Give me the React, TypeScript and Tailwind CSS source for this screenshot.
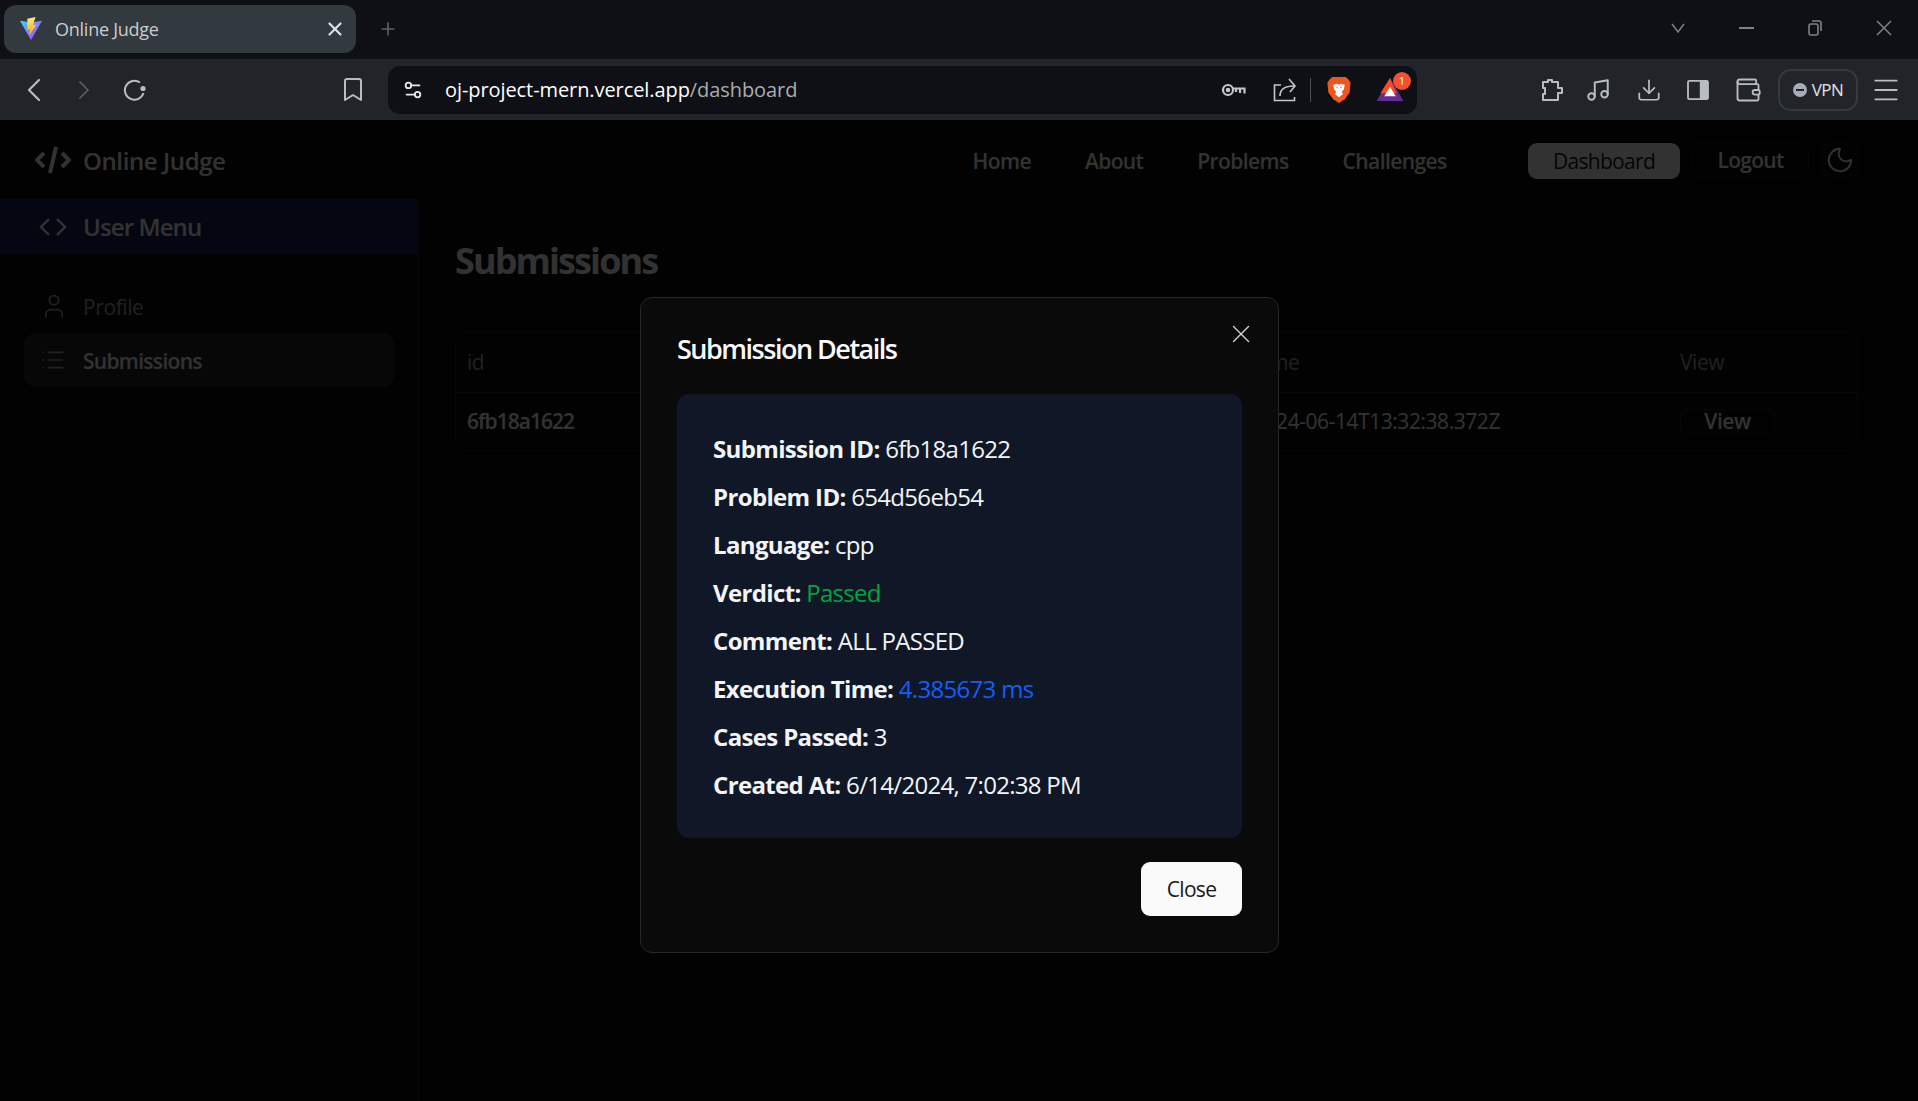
import { ReactNode } from "react";
import { ChevronLeft, ChevronRight, Download, List, Menu, Moon, Music, Plus, Settings2, User, Wallet, X } from "lucide-react";

function ViteLogo() {
  return (
    <svg width="24" height="24" viewBox="0 0 26 26">
      <defs>
        <linearGradient id="vt1" x1="0" y1="0" x2="1" y2="1">
          <stop offset="0" stopColor="#41d1ff" />
          <stop offset="1" stopColor="#bd34fe" />
        </linearGradient>
        <linearGradient id="vt2" x1="0" y1="0" x2="0" y2="1">
          <stop offset="0" stopColor="#ffea83" />
          <stop offset="1" stopColor="#ffa800" />
        </linearGradient>
      </defs>
      <path d="M1 4 L13 6 L25 4 L13 25 Z" fill="url(#vt1)" />
      <path d="M18 0 L9 2 L9 14 L12 13 L11 20 L19 8 L15 9 Z" fill="url(#vt2)" />
    </svg>
  );
}

function KeyIcon() {
  return (
    <svg width="25" height="16" viewBox="0 0 25 16" fill="none" stroke="#c4c7ca" strokeWidth="2.2">
      <circle cx="7" cy="8" r="5" />
      <circle cx="7" cy="8" r="1.2" />
      <path d="M12 6.5h11.5v5M19 6.5v4.5M15 6.5v3.5" />
    </svg>
  );
}

function ShareIcon() {
  return (
    <svg width="24" height="24" viewBox="0 0 24 24" fill="none" stroke="#c4c7ca" strokeWidth="1.6">
      <path d="M8 7H1.5v15.5h20V19" />
      <path d="M7 18c0-6 4-10 14-10" />
      <path d="M16 1l6 7-5 6" />
    </svg>
  );
}

function BraveIcon() {
  return (
    <svg width="24" height="27" viewBox="0 0 24 28">
      <path d="M5 1h14l3 3 2 3-1 10-5 7-6 4-6-4-5-7L0 7l2-3z" fill="#f1561f" />
      <path d="M6 9l4-1 2 1 2-1 4 1-1 5-2 2 1 3-4 3-4-3 1-3-2-2z" fill="#fff" />
      <path d="M9 11l2 1-1 1zM15 11l-2 1 1 1z" fill="#f1561f" />
    </svg>
  );
}

function RewardsIcon() {
  return (
    <div className="relative w-[28px] h-[26px]">
      <svg width="28" height="23" viewBox="0 0 28 24" className="absolute left-0 top-[1px]">
        <path d="M14 0L28 24H0Z" fill="#662d91" />
        <path d="M14 0L21 16H4Z" fill="#ff4724" />
        <path d="M14 9L20 19H8Z" fill="#fff" />
      </svg>
      <span className="absolute left-[17px] top-[-5px] w-[18px] h-[18px] rounded-full bg-[#f3512f] text-white text-[11px] leading-[18px] text-center">
        1
      </span>
    </div>
  );
}

function ReloadIcon() {
  return (
    <svg width="24" height="22" viewBox="0 0 24 22" fill="none" stroke="#b8bdc0" strokeWidth="2">
      <path d="M17 3.5A9.5 9.5 0 1 0 20.5 14" />
      <circle cx="20" cy="9.5" r="2.6" fill="#b8bdc0" stroke="none" />
    </svg>
  );
}

function BookmarkIcon() {
  return (
    <svg width="18" height="24" viewBox="0 0 18 24" fill="none" stroke="#b8bdc0" strokeWidth="2">
      <path d="M3 1h12a2 2 0 0 1 2 2v19l-8-5-8 5V3a2 2 0 0 1 2-2z" strokeLinejoin="round" />
    </svg>
  );
}

function PuzzleIcon() {
  return (
    <svg width="24" height="22" viewBox="0 0 24 22" fill="none" stroke="#b8bdc0" strokeWidth="2">
      <path d="M3 3h5V1h4v2h6v6h4v5h-4v7H3v-6h2V9H3z" strokeLinejoin="round" />
    </svg>
  );
}

function SidePanelIcon() {
  return (
    <svg width="22" height="20" viewBox="0 0 24 22">
      <rect x="1" y="1" width="22" height="20" rx="1.5" fill="none" stroke="#b8bdc0" strokeWidth="2" />
      <rect x="14" y="1" width="9" height="20" fill="#b8bdc0" />
    </svg>
  );
}

function WindowControls() {
  return (
    <div className="ml-auto flex items-center h-[46px] mr-[26px]">
      <svg width="14" height="10" viewBox="0 0 14 10" fill="none" stroke="#7c8287" strokeWidth="1.5">
        <path d="M1 1l6 8 6-8" />
      </svg>
      <div className="ml-[54px] w-[15px] h-[2px] bg-[#7c8287]" />
      <svg className="ml-[54px]" width="14" height="16" viewBox="0 0 14 16" fill="none" stroke="#7c8287" strokeWidth="1.6">
        <rect x="1" y="4" width="9" height="11" rx="2" />
        <path d="M4 1h7a2 2 0 0 1 2 2v8" />
      </svg>
      <svg className="ml-[54px]" width="16" height="16" viewBox="0 0 16 16" fill="none" stroke="#7c8287" strokeWidth="1.5">
        <path d="M1 1l14 14M15 1L1 15" />
      </svg>
    </div>
  );
}

const navLinks = [
  { label: "Home", cls: "ml-[747px]" },
  { label: "About", cls: "ml-[54px]" },
  { label: "Problems", cls: "ml-[54px]" },
  { label: "Challenges", cls: "ml-[54px]" },
];

const detalhes: { label: string; value: string; cor?: string }[] = [
  { label: "Submission ID:", value: "6fb18a1622" },
  { label: "Problem ID:", value: "654d56eb54" },
  { label: "Language:", value: "cpp" },
  { label: "Verdict:", value: "Passed", cor: "text-green-600" },
  { label: "Comment:", value: "ALL PASSED" },
  { label: "Execution Time:", value: "4.385673 ms", cor: "text-blue-600" },
  { label: "Cases Passed:", value: "3" },
  { label: "Created At:", value: "6/14/2024, 7:02:38 PM" },
];

function Slot({ w, children }: { w: string; children: ReactNode }) {
  return <div className={`flex items-center justify-center ${w}`}>{children}</div>;
}

function BrowserChrome() {
  return (
    <div className="h-[120px] flex flex-col font-['Open_Sans',sans-serif]">
      <div className="h-[59px] bg-[#0e1015] flex items-start pt-[5px]">
        <div className="ml-[4px] w-[352px] h-[48px] rounded-[12px] bg-[#32393f] flex items-center pl-[15px] pr-[10px]">
          <ViteLogo />
          <span className="ml-[12px] text-[18px] tracking-[-0.25px] text-[#c9ccce]">Online Judge</span>
          <X className="ml-auto text-[#dfe1e3]" size={22} strokeWidth={2.4} />
        </div>
        <Plus className="ml-[22px] mt-[14px] text-[#5b6166]" size={20} strokeWidth={2} />
        <WindowControls />
      </div>
      <div className="h-[61px] bg-[#212529] flex items-center text-[#b8bdc0]">
        <Slot w="w-[68px]">
          <ChevronLeft size={40} strokeWidth={1.3} />
        </Slot>
        <Slot w="w-[32px]">
          <ChevronRight className="text-[#5b6166]" size={40} strokeWidth={1.3} />
        </Slot>
        <Slot w="w-[70px]">
          <ReloadIcon />
        </Slot>
        <Slot w="w-[296px]">
          <div className="ml-[70px]">
            <BookmarkIcon />
          </div>
        </Slot>
        <div className="ml-[-78px] w-[1029px] h-[48px] rounded-[12px] bg-[#0e1015] flex items-center">
          <Settings2 className="ml-[14px] text-[#e6e7e8]" size={22} strokeWidth={2} />
          <span className="ml-[21px] text-[20px] tracking-[-0.08px] text-white">
            oj-project-mern.vercel.app<span className="text-[#a9adb0]">/dashboard</span>
          </span>
          <div className="ml-auto flex items-center mr-[13px]">
            <KeyIcon />
            <div className="ml-[27px]">
              <ShareIcon />
            </div>
            <div className="ml-[13px] w-px h-[24px] bg-[#4a4f53]" />
            <div className="ml-[16px]">
              <BraveIcon />
            </div>
            <div className="ml-[25px]">
              <RewardsIcon />
            </div>
          </div>
        </div>
        <div className="ml-[123px]">
          <PuzzleIcon />
        </div>
        <Music className="ml-[21px]" size={26} strokeWidth={1.8} />
        <Download className="ml-[25px]" size={26} strokeWidth={1.6} />
        <div className="ml-[25px]">
          <SidePanelIcon />
        </div>
        <Wallet className="ml-[25px]" size={28} strokeWidth={1.6} />
        <div className="ml-[16px] w-[80px] h-[42px] rounded-[13px] border-2 border-[#343a40] flex items-center justify-center gap-[5px]">
          <span className="w-[14px] h-[14px] rounded-full bg-[#a7acbb] flex items-center justify-center">
            <span className="w-[8px] h-[2px] bg-[#212529]" />
          </span>
          <span className="text-[17px] tracking-[-0.6px] text-[#e0e2e4]">VPN</span>
        </div>
        <Menu className="ml-[12px]" size={32} strokeWidth={1.4} />
      </div>
    </div>
  );
}

function SiteHeader() {
  return (
    <div className="h-[79px] flex items-center pr-[60px]">
      <svg className="ml-[35px] shrink-0" width="36" height="28" viewBox="0 0 36 28" fill="none" stroke="#fafafa" strokeWidth="4">
        <path d="M9 7L2 14l7 7" />
        <path d="M27 7l7 7-7 7" />
        <path d="M21 1l-6 26" />
      </svg>
      <span className="ml-[12px] mt-[3px] text-[24px] font-semibold tracking-[-0.4px] text-[#fafafa]">Online Judge</span>
      {navLinks.map((l) => (
        <span key={l.label} className={`${l.cls} mt-[4px] text-[21px] font-semibold tracking-[-0.6px] text-[#fafafa]`}>
          {l.label}
        </span>
      ))}
      <div className="ml-auto w-[152px] h-[36px] rounded-[9px] bg-[#fafafa] text-[#18181b] text-[21px] font-medium tracking-[-0.7px] flex items-center justify-center pt-[2px] mt-[2px]">
        Dashboard
      </div>
      <div className="ml-[12px] w-[117px] h-[36px] rounded-[9px] border border-[#27272a] text-[#fafafa] text-[21px] font-semibold tracking-[-0.7px] flex items-center justify-center pt-[3px]">
        Logout
      </div>
      <div className="ml-[13px] w-[36px] h-[36px] rounded-[9px] border border-[#27272a] flex items-center justify-center text-[#fafafa]">
        <Moon size={30} strokeWidth={1.5} />
      </div>
    </div>
  );
}

function Sidebar() {
  return (
    <div className="w-[419px] shrink-0 border-r border-[#27272a] bg-[#0c0c0c] h-full">
      <div className="h-[55px] bg-[#172554] flex items-center">
        <svg className="ml-[39px] shrink-0" width="28" height="20" viewBox="0 0 28 20" fill="none" stroke="#fafafa" strokeWidth="2.4">
          <path d="M10 2L2 10l8 8" />
          <path d="M18 2l8 8-8 8" />
        </svg>
        <span className="ml-[16px] text-[24px] font-semibold tracking-[-0.9px] text-[#fafafa]">User Menu</span>
      </div>
      <div className="mt-[25px] px-[24px] flex flex-col">
        <div className="h-[54px] flex items-center">
          <User className="ml-[16px] text-[#a1a1aa]" size={28} strokeWidth={1.5} />
          <span className="ml-[15px] pt-[4px] text-[21px] font-medium tracking-[-0.4px] text-[#a1a1aa]">Profile</span>
        </div>
        <div className="h-[54px] w-[370px] rounded-[12px] bg-[#27272a] flex items-center">
          <List className="ml-[16px] text-[#a1a1aa]" size={26} strokeWidth={1.5} />
          <span className="ml-[17px] pt-[4px] text-[21px] font-semibold tracking-[-0.7px] text-[#fafafa]">Submissions</span>
        </div>
      </div>
    </div>
  );
}

function TabelaSubmissoes() {
  return (
    <div className="flex-1 pl-[36px] pr-[60px] pt-[42px]">
      <h1 className="text-[36px] leading-[40px] font-bold tracking-[-1.9px] text-[#fafafa]">Submissions</h1>
      <div className="mt-[51px] rounded-[12px] border border-[#27272a] text-[21px] tracking-[-0.45px]">
        <div className="h-[60px] grid grid-cols-[786px_427px_1fr] items-center px-[11px] border-b border-[#27272a] font-medium text-[#a1a1aa]">
          <span>id</span>
          <span>Time</span>
          <span>View</span>
        </div>
        <div className="h-[57px] grid grid-cols-[786px_427px_1fr] items-center px-[11px] text-[#fafafa]">
          <span className="font-semibold tracking-[-1px]">6fb18a1622</span>
          <span>2024-06-14T13:32:38.372Z</span>
          <span className="w-[95px] h-[25px] rounded-[6px] border border-[#27272a] flex items-center justify-center font-semibold">View</span>
        </div>
      </div>
    </div>
  );
}

function ModalDetalhes() {
  return (
    <div className="absolute left-[640px] top-[177px] w-[639px] h-[656px] rounded-[12px] border border-[#27272a] bg-[#0a0a0a] px-[36px] pt-[36px] font-['Open_Sans',sans-serif]">
      <X className="absolute right-[22px] top-[21px] text-[#d4d4d4]" size={30} strokeWidth={1.1} />
      <h2 className="text-[27px] leading-[27px] font-semibold tracking-[-1.5px] text-[#fafafa] mt-[1px]">Submission Details</h2>
      <div className="mt-[32px] h-[444px] rounded-[12px] bg-gray-900 px-[36px] pt-[37px] text-[24px] leading-[36px] text-gray-100 tracking-[-0.7px] flex flex-col gap-[12px]">
        {detalhes.map((d) => (
          <p key={d.label}>
            <span className="font-bold tracking-[-0.65px]">{d.label}</span>{" "}
            <span className={d.cor}>{d.value}</span>
          </p>
        ))}
      </div>
      <div className="mt-[24px] flex justify-end">
        <button className="w-[101px] h-[54px] pt-[2px] rounded-[9px] bg-[#fafafa] text-[#18181b] text-[21px] font-medium tracking-[-0.7px]">
          Close
        </button>
      </div>
    </div>
  );
}

export default function App() {
  return (
    <div className="w-[1918px] h-[1101px] overflow-hidden bg-[#0a0a0a] flex flex-col">
      <BrowserChrome />
      <div className="relative flex-1 flex flex-col font-['Open_Sans',sans-serif]">
        <SiteHeader />
        <div className="flex-1 flex min-h-0">
          <Sidebar />
          <TabelaSubmissoes />
        </div>
        <div className="absolute inset-0 bg-black/80" />
        <ModalDetalhes />
      </div>
    </div>
  );
}
